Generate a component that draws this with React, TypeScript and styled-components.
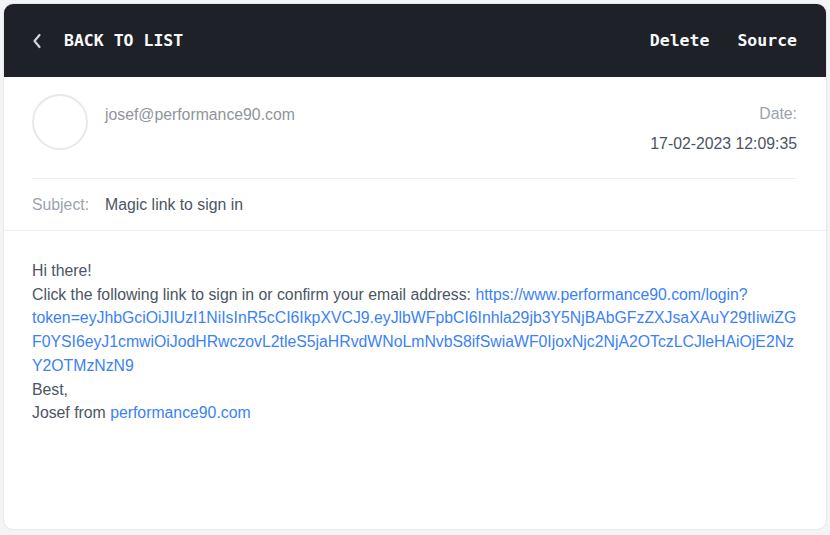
import React from 'react';
import styled, { createGlobalStyle } from 'styled-components';

const GlobalStyle = createGlobalStyle`
  html, body {
    margin: 0;
    padding: 0;
    background: #f3f4f6;
  }
  body {
    padding: 3px;
    font-family: 'Liberation Sans', Arial, sans-serif;
    font-size: 15.8px;
  }
`;

const Card = styled.div`
  box-sizing: border-box;
  width: 824px;
  height: 527px;
  background: #ffffff;
  border: 1px solid #e5e7eb;
  border-radius: 10px;
  overflow: hidden;
  display: flex;
  flex-direction: column;
`;

const Toolbar = styled.header`
  height: 73px;
  flex-shrink: 0;
  background: #1f2128;
  display: flex;
  align-items: center;
  justify-content: space-between;
  padding: 0 29px 0 28px;
  font-family: 'DejaVu Sans Mono', monospace;
  font-weight: bold;
  font-size: 16.5px;
  color: #f9fafb;
`;

const BackButton = styled.a`
  display: flex;
  align-items: center;
  gap: 22px;
  text-transform: uppercase;
  cursor: pointer;
`;

const Actions = styled.nav`
  display: flex;
  gap: 28px;
`;

const Action = styled.a`
  cursor: pointer;
`;

const Meta = styled.section`
  flex-shrink: 0;
  padding: 0 29px 0 28px;
  border-bottom: 1px solid #eceef1;
`;

const FromRow = styled.div`
  display: flex;
  justify-content: space-between;
  padding: 17px 0 0;
  height: 102px;
  box-sizing: border-box;
  border-bottom: 1px solid #eceef1;
`;

const Sender = styled.div`
  display: flex;
  align-items: flex-start;
  gap: 17px;
`;

const Avatar = styled.div`
  box-sizing: border-box;
  width: 56px;
  height: 56px;
  border-radius: 50%;
  border: 2px solid #e8e8ed;
`;

const Email = styled.span`
  line-height: 24px;
  margin-top: 9px;
  color: #8f949c;
`;

const DateBlock = styled.div`
  text-align: right;
  line-height: 30px;
  margin-top: 5px;
`;

const Label = styled.div`
  color: #9ca3af;
`;

const Value = styled.div`
  color: #4b5563;
`;

const SubjectRow = styled.div`
  display: flex;
  gap: 16px;
  height: 51px;
  align-items: center;
`;

const SubjectLabel = styled.span`
  color: #9ca3af;
`;

const SubjectValue = styled.span`
  color: #4b5563;
`;

const Body = styled.article`
  padding: 28px 28px 0 28px;
  line-height: 23.7px;
  color: #4b5563;
  overflow-wrap: anywhere;
`;

const Link = styled.a`
  color: #3b82f6;
  text-decoration: none;
`;

const Chevron = () => (
  <svg width="10" height="16" viewBox="0 0 10 16" fill="none">
    <path d="M7.5 2 L2.5 8 L7.5 14" stroke="#d1d5db" strokeWidth="2.2" strokeLinecap="round" strokeLinejoin="round" />
  </svg>
);

const TOKEN =
  'token=eyJhbGciOiJIUzI1NiIsInR5cCI6IkpXVCJ9.eyJlbWFpbCI6Inhla29jb3Y5NjBAbGFzZXJsaXAuY29tIiwiZGF0YSI6eyJ1cmwiOiJodHRwczovL2tleS5jaHRvdWNoLmNvbS8ifSwiaWF0IjoxNjc2NjA2OTczLCJleHAiOjE2NzY2OTMzNzN9';

export default function App() {
  return (
    <>
      <GlobalStyle />
      <Card>
        <Toolbar>
          <BackButton>
            <Chevron />
            Back to list
          </BackButton>
          <Actions>
            <Action>Delete</Action>
            <Action>Source</Action>
          </Actions>
        </Toolbar>
        <Meta>
          <FromRow>
            <Sender>
              <Avatar />
              <Email>josef@performance90.com</Email>
            </Sender>
            <DateBlock>
              <Label>Date:</Label>
              <Value>17-02-2023 12:09:35</Value>
            </DateBlock>
          </FromRow>
          <SubjectRow>
            <SubjectLabel>Subject:</SubjectLabel>
            <SubjectValue>Magic link to sign in</SubjectValue>
          </SubjectRow>
        </Meta>
        <Body>
          Hi there!
          <br />
          Click the following link to sign in or confirm your email address:{' '}
          <Link>
            https://www.performance90.com/login?<wbr />
            {TOKEN}
          </Link>
          <br />
          Best,
          <br />
          Josef from <Link>performance90.com</Link>
        </Body>
      </Card>
    </>
  );
}
